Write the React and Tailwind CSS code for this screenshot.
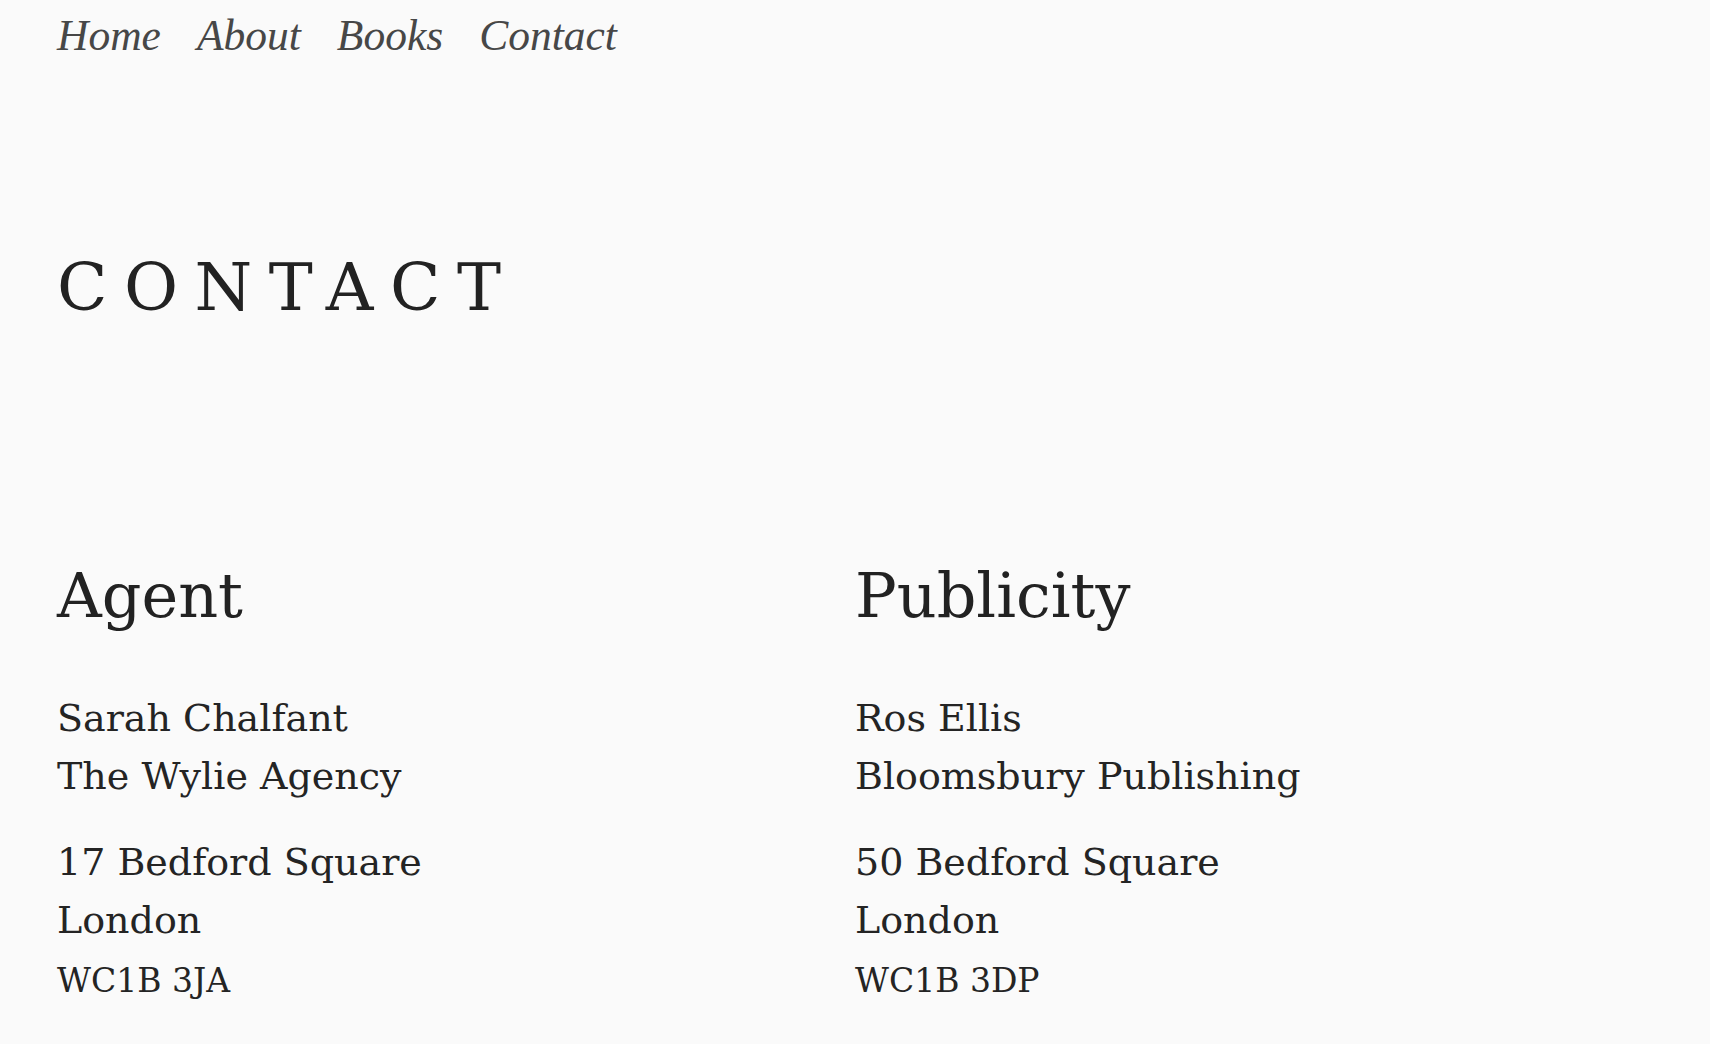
const serif = "font-['DejaVu_Serif',serif]";

const Column = ({ title, name, company, street, city, postcode }) => {
  return (
    <div className="flex flex-col">
      <h2 className={`${serif} text-[62px] leading-[64px] font-normal text-[#222]`}>
        {title}
      </h2>
      <div className={`${serif} mt-[61px] text-[38px] leading-[58px] text-[#242424]`}>
        <p>{name}</p>
        <p>{company}</p>
      </div>
      <div className={`${serif} mt-[28px] text-[38px] leading-[58px] text-[#242424]`}>
        <p>{street}</p>
        <p>{city}</p>
        <p className="text-[33px] leading-[64px]">{postcode}</p>
      </div>
    </div>
  );
};

export default function App() {
  return (
    <div className="min-h-[1044px] bg-[#fafafa] px-[57px] pb-10">
      <nav className="flex gap-[36px] pt-[5px] font-['Liberation_Serif',serif] italic text-[43.5px] leading-[60px] text-[#474747]">
        <a href="#">Home</a>
        <a href="#">About</a>
        <a href="#">Books</a>
        <a href="#">Contact</a>
      </nav>

      <h1 className={`${serif} mt-[190px] text-[66px] leading-[66px] font-normal tracking-[0.25em] text-[#222]`}>
        CONTACT
      </h1>

      <div className="mt-[243px] grid grid-cols-2">
        <Column
          title="Agent"
          name="Sarah Chalfant"
          company="The Wylie Agency"
          street="17 Bedford Square"
          city="London"
          postcode="WC1B 3JA"
        />
        <Column
          title="Publicity"
          name="Ros Ellis"
          company="Bloomsbury Publishing"
          street="50 Bedford Square"
          city="London"
          postcode="WC1B 3DP"
        />
      </div>
    </div>
  );
}
